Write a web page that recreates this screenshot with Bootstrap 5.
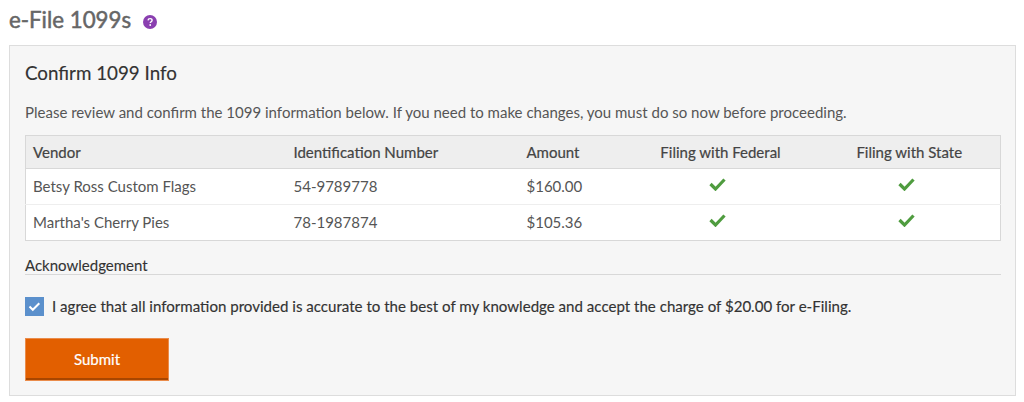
<!DOCTYPE html>
<html lang="en"><head><meta charset="utf-8"><title>e-File 1099s</title>
<link href="https://cdn.jsdelivr.net/npm/bootstrap@5.3.0/dist/css/bootstrap.min.css" rel="stylesheet">
<style>
html,body{height:402px;overflow:hidden}
body{font-family:Lato,"Liberation Sans",sans-serif;background:#fff;color:#555;font-size:15px;padding:0 8px 0 9px}
.page-head{height:45px;gap:12px;padding-bottom:5px}
.page-title{font-size:22.3px;font-weight:400;line-height:1;margin:0;color:#666;-webkit-text-stroke:.5px #666}
.help-dot{width:14px;height:14px;margin-top:3px}
.panel{height:351px;background:#f6f6f6;border:1px solid #ddd;padding:0 15px}
.panel-title{font-size:18.8px;font-weight:400;color:#333;line-height:22px;margin:16px 0 0;-webkit-text-stroke:.15px #333}
.intro{font-size:15.02px;line-height:20px;margin:18px 0 13px;color:#555}
.data-grid{margin:0;border:1px solid #d8d8d8;background:#fff;table-layout:fixed;width:976px;font-size:15px}
.data-grid th{background:#eee;color:#444;font-weight:400;border-bottom:1px solid #d8d8d8;height:33px;padding:0 7px;vertical-align:middle;-webkit-text-stroke:.2px #444}
.data-grid td{height:36px;padding:0 7px;vertical-align:middle;color:#555;border-bottom:1px solid #eee;box-shadow:none}
.data-grid tr:last-child td{border-bottom:0}
.check-mark{width:17px;height:14px;display:block;margin:-5px auto 0;transform:translateX(-3px)}
.ack-head{font-size:15px;color:#333;line-height:18px;margin-top:15px;border-bottom:1px solid #d8d8d8;width:976px;-webkit-text-stroke:.1px #333}
.agree{gap:8px;margin-top:22px;height:19px}
.agree-box{width:19px;height:19px;background:#5b90cc;flex:none}
.agree-text{font-size:15.08px;color:#333;line-height:19px;-webkit-text-stroke:.15px #333}
.submit-btn{display:block;margin-top:22px;width:144px;height:43px;background:#e25f00;color:#fff;border:1px solid #ea8c4b;box-shadow:inset 0 -2px 0 #a84600;border-radius:0;font-size:15px;font-weight:400;-webkit-text-stroke:.2px #fff;padding:0}
.submit-btn:hover{background:#e25f00;color:#fff;border-color:#ea8c4b}
</style></head>
<body>
<div class="page-head d-flex align-items-center">
  <h1 class="page-title">e-File 1099s</h1>
  <svg class="help-dot" viewBox="0 0 14 14" role="img" aria-label="Help"><circle cx="7" cy="7" r="7" fill="#8a3fb0"/><path d="M5 5.4C5.1 4.2 6 3.6 7.1 3.6c1.2 0 2 .7 2 1.7 0 .8-.5 1.2-1.1 1.6-.5.3-.7.6-.7 1.1" fill="none" stroke="#fff" stroke-width="1.4"/><circle cx="7.2" cy="10" r=".9" fill="#fff"/></svg>
</div>
<div class="panel">
  <h2 class="panel-title">Confirm 1099 Info</h2>
  <p class="intro">Please review and confirm the 1099 information below. If you need to make changes, you must do so now before proceeding.</p>
  <table class="table data-grid">
    <colgroup><col style="width:261px"><col style="width:233px"><col style="width:103px"><col style="width:196px"><col></colgroup>
    <thead><tr><th>Vendor</th><th>Identification Number</th><th>Amount</th><th class="text-center">Filing with Federal</th><th class="text-center">Filing with State</th></tr></thead>
    <tbody>
      <tr><td>Betsy Ross Custom Flags</td><td>54-9789778</td><td>$160.00</td>
        <td><svg class="check-mark" viewBox="0 0 17 14"><path d="M1.5 7l5 5L15.5 2.5" fill="none" stroke="#4f9c3f" stroke-width="3.2"/></svg></td>
        <td><svg class="check-mark" viewBox="0 0 17 14"><path d="M1.5 7l5 5L15.5 2.5" fill="none" stroke="#4f9c3f" stroke-width="3.2"/></svg></td></tr>
      <tr><td>Martha's Cherry Pies</td><td>78-1987874</td><td>$105.36</td>
        <td><svg class="check-mark" viewBox="0 0 17 14"><path d="M1.5 7l5 5L15.5 2.5" fill="none" stroke="#4f9c3f" stroke-width="3.2"/></svg></td>
        <td><svg class="check-mark" viewBox="0 0 17 14"><path d="M1.5 7l5 5L15.5 2.5" fill="none" stroke="#4f9c3f" stroke-width="3.2"/></svg></td></tr>
    </tbody>
  </table>
  <div class="ack-head">Acknowledgement</div>
  <div class="agree d-flex align-items-center">
    <svg class="agree-box" viewBox="0 0 19 19"><path d="M4.5 9.5l3.3 3.3 6.5-6.5" fill="none" stroke="#fff" stroke-width="2"/></svg>
    <span class="agree-text">I agree that all information provided is accurate to the best of my knowledge and accept the charge of $20.00 for e-Filing.</span>
  </div>
  <button type="button" class="btn submit-btn">Submit</button>
</div>
<script src="https://cdn.jsdelivr.net/npm/bootstrap@5.3.0/dist/js/bootstrap.bundle.min.js"></script>
</body></html>
